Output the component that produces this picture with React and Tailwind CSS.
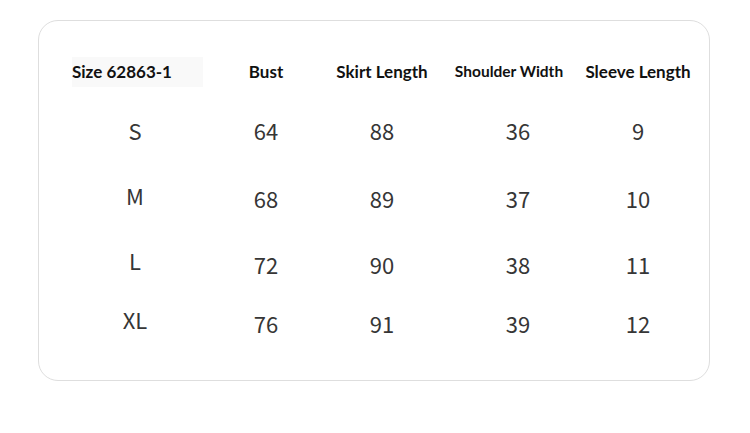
import React from "react";

const rows = [
  { size: "S", v: ["64", "88", "36", "9"], h: "h-[68px]", sz: "pb-0" },
  { size: "M", v: ["68", "89", "37", "10"], h: "h-[68px]", sz: "pb-[6px]" },
  { size: "L", v: ["72", "90", "38", "11"], h: "h-[64px]", sz: "pb-[8px]" },
  { size: "XL", v: ["76", "91", "39", "12"], h: "h-[54px]", sz: "pb-[8px]" },
];

export default function App() {
  const num = "flex items-center justify-center whitespace-nowrap";
  return (
    <div className="w-[750px] h-[433px] bg-white pt-[20px] pl-[38px]" style={{ fontFamily: "Lato, 'Noto Sans', sans-serif" }}>
      <div className="w-[672px] h-[361px] rounded-[20px] border border-[#dedede] bg-white pt-[35px] pl-[33px]">
        {/* header */}
        <div className="flex h-[32px] items-center text-[17px] font-bold text-[#111] whitespace-nowrap" style={{ fontFamily: "Lato, sans-serif" }}>
          <div className="w-[131px] h-[30px] flex items-center bg-[#f9f9f9]"><span>Size 62863-1</span></div>
          <div className="w-[126px] flex justify-center">Bust</div>
          <div className="w-[106px] flex justify-center">Skirt Length</div>
          <div className="w-[148px] flex justify-center text-[15.5px]">Shoulder Width</div>
          <div className="w-[110px] flex justify-center">Sleeve Length</div>
        </div>
        <div className="h-[8px]" />
        {rows.map((r) => (
          <div key={r.size} className={`flex ${r.h} text-[22px] text-[#363636]`} style={{ fontFamily: "'Noto Sans CJK SC', 'Noto Sans', sans-serif" }}>
            <div className={`w-[131px] ${num} pr-[5px] ${r.sz}`}>{r.size}</div>
            <div className={`w-[126px] ${num}`}>{r.v[0]}</div>
            <div className={`w-[106px] ${num}`}>{r.v[1]}</div>
            <div className={`w-[148px] ${num} pl-[18px]`}>{r.v[2]}</div>
            <div className={`w-[110px] ${num}`}>{r.v[3]}</div>
          </div>
        ))}
      </div>
    </div>
  );
}
